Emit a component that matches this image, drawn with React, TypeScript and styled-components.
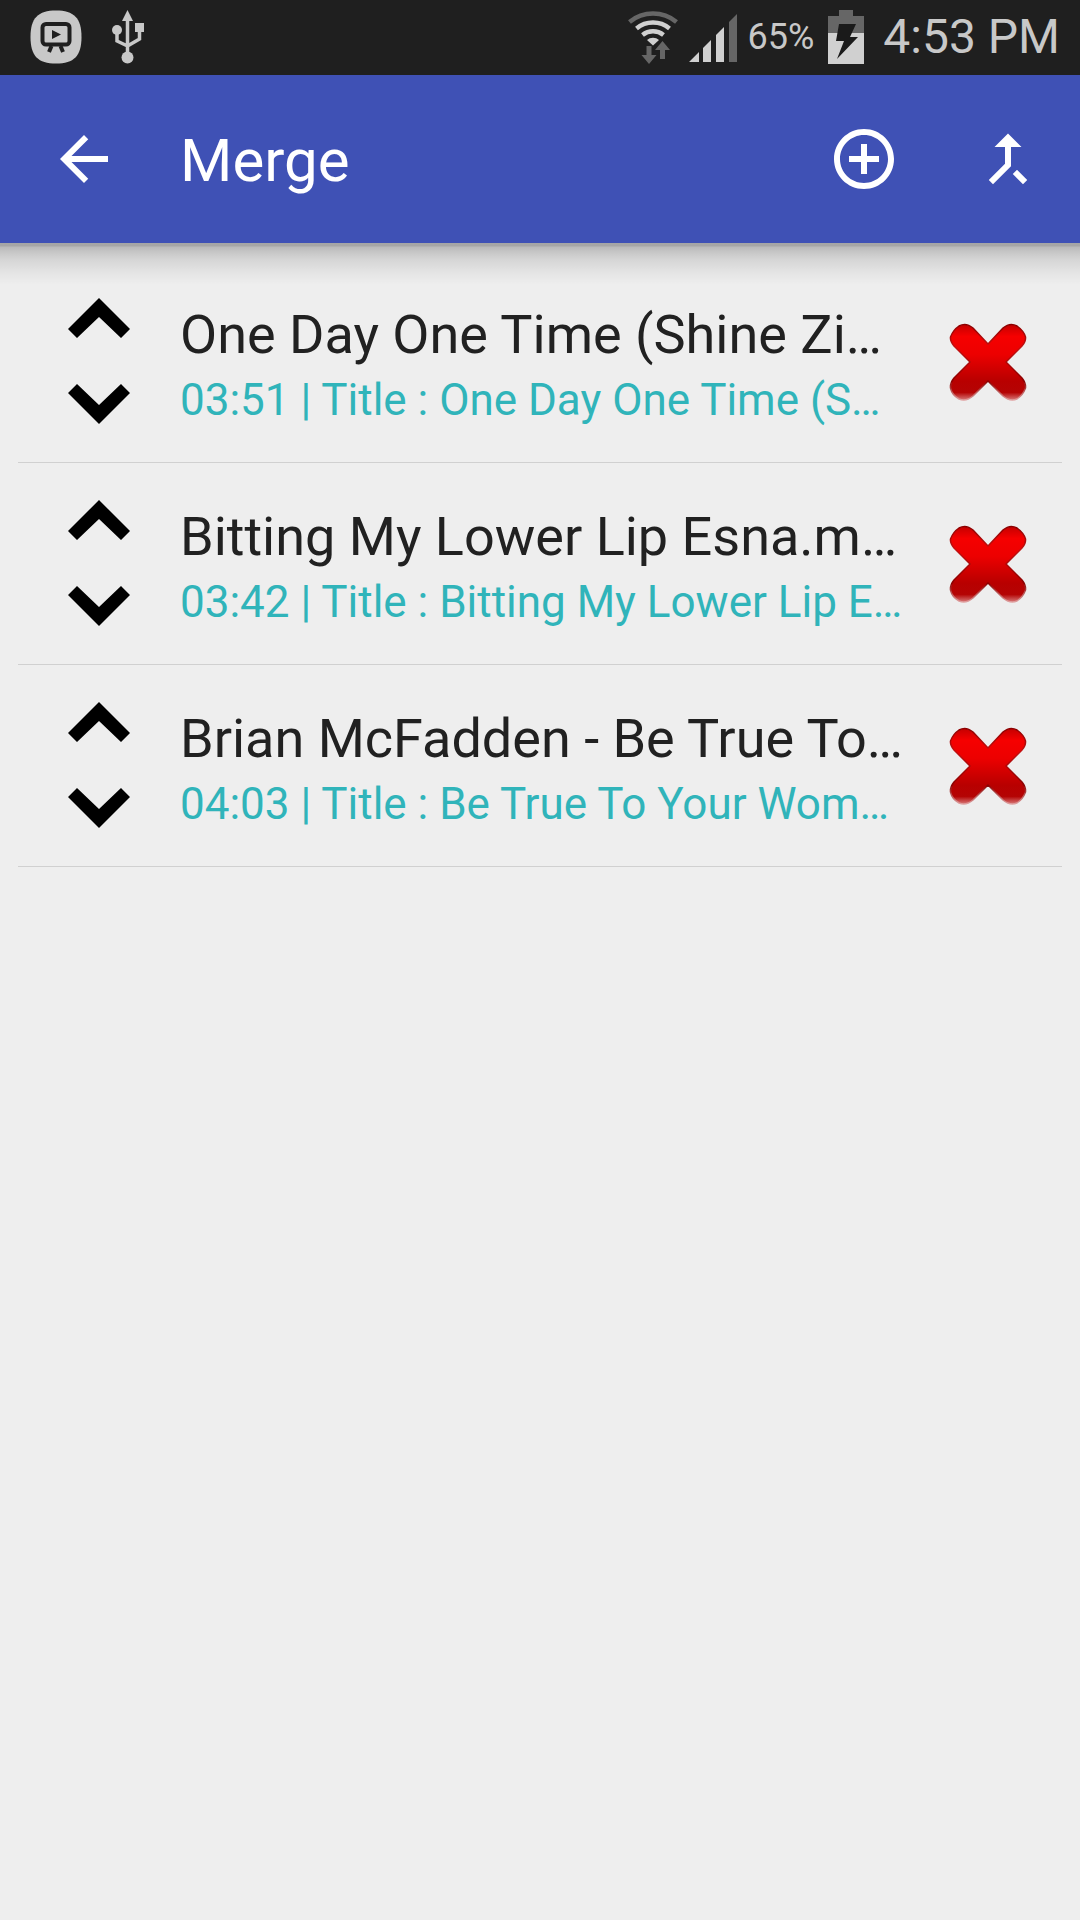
import React from "react";
import styled, { createGlobalStyle } from "styled-components";

const GlobalStyle = createGlobalStyle`
  *, *::before, *::after { box-sizing: border-box; }
  body {
    margin: 0;
    background: #eeeeee;
    font-family: Roboto, "Noto Sans", sans-serif;
  }
`;

const Screen = styled.div`
  min-height: 100vh;
  background: #eeeeee;
`;

const StatusBar = styled.div`
  display: flex;
  align-items: center;
  justify-content: space-between;
  height: 75px;
  padding: 0 20px 2px 30px;
  background: #1f1f1f;
  color: #c8c8c8;
`;

const StatusGroup = styled.div<{ $gap: number }>`
  display: flex;
  align-items: center;
  gap: ${(p) => p.$gap}px;
`;

const StatusText = styled.span<{ $size: number }>`
  font-size: ${(p) => p.$size}px;
  line-height: 56px;
  white-space: nowrap;
`;

const Glyph = styled.svg`
  display: block;
  flex: none;
`;

const Toolbar = styled.header`
  position: relative;
  display: flex;
  align-items: center;
  height: 168px;
  background: #3f51b5;
  color: #ffffff;

  &::after {
    content: "";
    position: absolute;
    top: 100%;
    left: 0;
    right: 0;
    height: 42px;
    pointer-events: none;
    background: linear-gradient(
      rgba(0, 0, 0, 0.3) 0,
      rgba(0, 0, 0, 0.3) 3px,
      rgba(0, 0, 0, 0.22) 4px,
      rgba(0, 0, 0, 0.15) 11px,
      rgba(0, 0, 0, 0.1) 17px,
      rgba(0, 0, 0, 0.04) 30px,
      rgba(0, 0, 0, 0) 42px
    );
  }
`;

const Heading = styled.h1`
  flex: 1;
  margin: 0;
  padding: 4px 0 0 12px;
  font-size: 60px;
  font-weight: 400;
  line-height: 72px;
`;

const IconButton = styled.button<{ $width: number; $height: number }>`
  display: flex;
  align-items: center;
  justify-content: center;
  flex: none;
  width: ${(p) => p.$width}px;
  height: ${(p) => p.$height}px;
  padding: 0;
  border: 0;
  background: none;
  color: inherit;
  cursor: pointer;
`;

const TrackList = styled.ul`
  margin: 0;
  padding: 18px;
  list-style: none;
`;

const TrackRow = styled.li`
  display: flex;
  align-items: center;
  height: 202px;
  border-bottom: 1px solid #d0d0d0;
`;

const MoveControls = styled.div`
  display: flex;
  flex-direction: column;
  flex: none;
  padding-bottom: 2px;
  color: #000000;
`;

const TrackText = styled.div`
  flex: 1;
  min-width: 0;
  padding-top: 8px;
  white-space: nowrap;
`;

const TrackName = styled.div`
  font-size: 54px;
  line-height: 68px;
  color: #212121;
`;

const TrackDetail = styled.div`
  font-size: 44px;
  line-height: 62px;
  color: #30b4ba;
`;

const BatterySlot = styled.div`
  padding: 0 8px 0 3px;
`;

const tracks = [
  {
    name: "One Day One Time (Shine Zi…",
    detail: "03:51 | Title : One Day One Time (S…",
  },
  {
    name: "Bitting My Lower Lip Esna.m…",
    detail: "03:42 | Title : Bitting My Lower Lip E…",
  },
  {
    name: "Brian McFadden - Be True To…",
    detail: "04:03 | Title : Be True To Your Wom…",
  },
];

const CastIcon = () => (
  <Glyph width="52" height="54" viewBox="0 0 52 54" aria-hidden="true">
    <path
      fill="#c8c8c8"
      d="M26 0.500C44 0.500 51.500 8 51.500 27S44 53.500 26 53.500 0.500 46 0.500 27 8 0.500 26 0.500z"
    />
    <rect x="12.500" y="14" width="27" height="20.500" rx="3.500" fill="none" stroke="#1f1f1f" strokeWidth="4" />
    <path fill="#1f1f1f" d="M22 20l9 4.500-9 4.500z" />
    <path d="M21.500 36l-2.500 6M30.500 36l2.500 6" stroke="#1f1f1f" strokeWidth="4" />
  </Glyph>
);

const UsbIcon = () => (
  <Glyph width="34" height="54" viewBox="0 0 34 54" aria-hidden="true">
    <g fill="#c8c8c8">
      <path d="M16.500 0L22 11H11z" />
      <circle cx="6" cy="20" r="5" />
      <rect x="24" y="13" width="9" height="9" />
      <circle cx="16.500" cy="47.500" r="6" />
    </g>
    <path
      d="M16.500 8V44M6 22V31L16.500 36M28.500 20V29L16.500 36"
      fill="none"
      stroke="#c8c8c8"
      strokeWidth="3.500"
    />
  </Glyph>
);

const WifiIcon = () => (
  <Glyph width="50" height="54" viewBox="0 0 50 54" aria-hidden="true">
    <g fill="none" strokeWidth="4.500">
      <path d="M1.500 12A37 37 0 0 1 48.500 12" stroke="#666666" />
      <path d="M8.500 18.500A26 26 0 0 1 41.500 18.500" stroke="#d0d0d0" />
      <path d="M14.500 25A17 17 0 0 1 35.500 25" stroke="#d0d0d0" />
    </g>
    <path fill="#d0d0d0" d="M19 30a9 9 0 0 1 12 0l-6 5.500z" />
    <path
      fill="#666666"
      d="M18.500 36h5v9h5l-7.500 9-7.500-9h5zM34.500 31l7.500 9h-5v9h-5v-9h-5z"
    />
  </Glyph>
);

const SignalIcon = () => (
  <Glyph width="48" height="54" viewBox="0 0 48 54" aria-hidden="true">
    <path fill="#d0d0d0" d="M0 52L10 42V52zM14 38L22 30V52H14zM27 25L35 17V52H27z" />
    <path fill="#666666" d="M40 12L48 4V52H40z" />
  </Glyph>
);

const BatteryIcon = () => (
  <Glyph width="36" height="54" viewBox="0 0 36 54" aria-hidden="true">
    <path fill="#666666" d="M11 0H25V6H36V24H0V6H11z" />
    <path fill="#d0d0d0" d="M0 23H36V54H0z" />
    <path fill="#1a1a1a" d="M11 14H28L22 27H30L9 49L16 31H8z" />
  </Glyph>
);

const ToolbarIcon = ({ d }: { d: string }) => (
  <Glyph width="72" height="72" viewBox="0 0 24 24" fill="currentColor" aria-hidden="true">
    <path d={d} />
  </Glyph>
);

const Chevron = ({ d }: { d: string }) => (
  <Glyph width="62" height="40" viewBox="0 0 62 40" fill="currentColor" aria-hidden="true">
    <path d={d} />
  </Glyph>
);

const RemoveIcon = () => (
  <Glyph width="78" height="78" viewBox="0 0 78 78" aria-hidden="true">
    <defs>
      <linearGradient id="removeFill" x1="0" y1="0" x2="0" y2="1">
        <stop offset="0" stopColor="#c40000" />
        <stop offset="0.160" stopColor="#f60000" />
        <stop offset="0.400" stopColor="#ec0000" />
        <stop offset="0.750" stopColor="#b80000" />
        <stop offset="0.900" stopColor="#b40404" />
        <stop offset="1" stopColor="#d87878" />
      </linearGradient>
      <linearGradient id="removeEdge" x1="0" y1="0" x2="0" y2="1">
        <stop offset="0" stopColor="#8c0000" />
        <stop offset="0.300" stopColor="#c41010" />
        <stop offset="0.750" stopColor="#8a0000" />
        <stop offset="1" stopColor="#e0a0a0" />
      </linearGradient>
    </defs>
    <path
      fill="url(#removeFill)"
      stroke="url(#removeEdge)"
      strokeWidth="1.500"
      strokeLinejoin="round"
      d="M39 21L54 5Q61 -1 68 3Q75 8 76.500 14Q77 19 73 23L57 39L73 55Q77 60 76.500 65Q74 72 68 76Q61 79 54 73L39 58L24 73Q17 79 10 76Q3 72 1.500 65Q1 60 5 55L21 39L5 23Q1 18 1.500 14Q4 7 10 3Q17 -1 24 5z"
    />
  </Glyph>
);

export default function App() {
  return (
    <Screen>
      <GlobalStyle />
      <StatusBar>
        <StatusGroup $gap={29}>
          <CastIcon />
          <UsbIcon />
        </StatusGroup>
        <StatusGroup $gap={11}>
          <WifiIcon />
          <SignalIcon />
          <StatusText $size={36}>65%</StatusText>
          <BatterySlot>
            <BatteryIcon />
          </BatterySlot>
          <StatusText $size={48}>4:53 PM</StatusText>
        </StatusGroup>
      </StatusBar>
      <Toolbar>
        <IconButton type="button" $width={168} $height={168} aria-label="Back">
          <ToolbarIcon d="M20 11H7.830l5.590-5.590L12 4l-8 8 8 8 1.410-1.410L7.830 13H20v-2z" />
        </IconButton>
        <Heading>Merge</Heading>
        <IconButton type="button" $width={144} $height={168} aria-label="Add track">
          <ToolbarIcon d="M13 7h-2v4H7v2h4v4h2v-4h4v-2h-4V7zM12 2C6.480 2 2 6.480 2 12s4.480 10 10 10 10-4.480 10-10S17.520 2 12 2zm0 18c-4.410 0-8-3.590-8-8s3.590-8 8-8 8 3.590 8 8-3.590 8-8 8z" />
        </IconButton>
        <IconButton type="button" $width={144} $height={168} aria-label="Merge tracks">
          <ToolbarIcon d="M17 20.410L18.410 19 15 15.590 13.590 17 17 20.410zM7.500 8H11v5.590L5.590 19 7 20.410l6-6V8h3.500L12 3.500 7.500 8z" />
        </IconButton>
      </Toolbar>
      <TrackList>
        {tracks.map((track) => (
          <TrackRow key={track.name}>
            <MoveControls>
              <IconButton type="button" $width={162} $height={86} aria-label="Move up">
                <Chevron d="M31 0L62 31L53 40L31 19L9 40L0 31z" />
              </IconButton>
              <IconButton type="button" $width={162} $height={86} aria-label="Move down">
                <Chevron d="M31 40L0 9L9 0L31 21L53 0L62 9z" />
              </IconButton>
            </MoveControls>
            <TrackText>
              <TrackName>{track.name}</TrackName>
              <TrackDetail>{track.detail}</TrackDetail>
            </TrackText>
            <IconButton type="button" $width={148} $height={148} aria-label="Remove track">
              <RemoveIcon />
            </IconButton>
          </TrackRow>
        ))}
      </TrackList>
    </Screen>
  );
}
